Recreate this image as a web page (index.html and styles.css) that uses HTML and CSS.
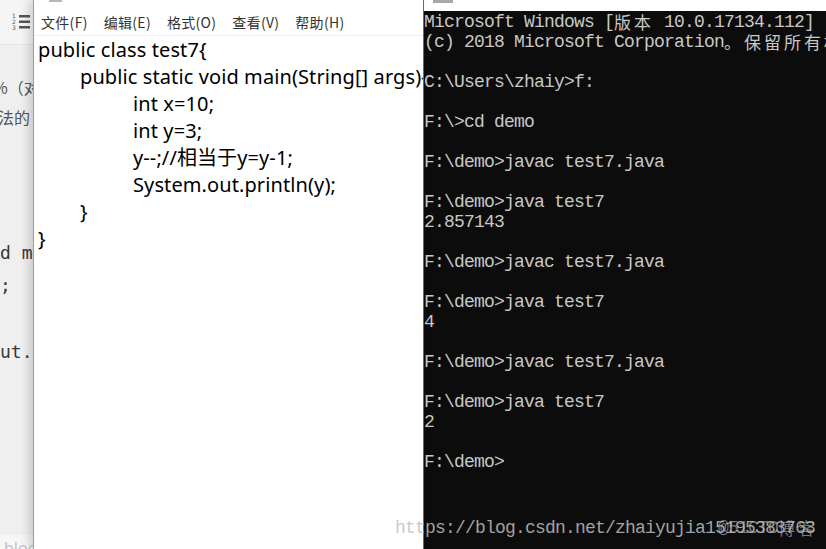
FILE: index.html
```html
<!DOCTYPE html>
<html lang="zh-CN">
<head>
<meta charset="UTF-8" />
<meta name="viewport" content="width=device-width, initial-scale=1" />
<title>test7 - 记事本 / 命令提示符</title>
<link rel="stylesheet" href="styles.css">
</head>
<body>
<div class="screen">

  <div class="page">
    <div class="page-toolbar">
      <svg class="list-icon" width="20" height="17" viewBox="0 0 20 17">
        <text x="0" y="5" font-size="6" font-family="DejaVu Sans" fill="#555">1</text>
        <text x="0" y="11" font-size="6" font-family="DejaVu Sans" fill="#555">2</text>
        <text x="0" y="17" font-size="6" font-family="DejaVu Sans" fill="#555">3</text>
        <rect x="7" y="2" width="11" height="2.5" fill="#555"/>
        <rect x="7" y="7.5" width="11" height="2.5" fill="#555"/>
        <rect x="7" y="13" width="11" height="2.5" fill="#555"/>
      </svg>
    </div>
    <div class="page-body">
      <p class="frag frag-a">%（对</p>
      <p class="frag frag-b">方法的</p>
      <pre class="frag-code"><span class="c1">void main</span>
<span class="c2">x;</span>

<span class="c3">System.out.</span></pre>
    </div>
    <div class="page-foot">blog</div>
  </div>

  <div class="notepad">
    <div class="np-title"><span class="np-icon"></span></div>
    <ul class="np-menu">
      <li>文件(F)</li>
      <li>编辑(E)</li>
      <li>格式(O)</li>
      <li>查看(V)</li>
      <li>帮助(H)</li>
    </ul>
    <div class="np-text">
      <div class="ln">public class test7{</div>
      <div class="ln ind1">public static void main(String[] args){</div>
      <div class="ln ind2">int x=10;</div>
      <div class="ln ind2">int y=3;</div>
      <div class="ln ind2">y--;//相当于y=y-1;</div>
      <div class="ln ind2">System.out.println(y);</div>
      <div class="ln ind1">}</div>
      <div class="ln">}</div>
    </div>
  </div>

  <div class="cmd">
    <div class="cmd-title"><span class="cmd-icon"></span></div>
    <pre class="cmd-out">Microsoft Windows [<span class="wide">版本</span> 10.0.17134.112]
(c) 2018 Microsoft Corporation<span class="wide">。保留所有权利。</span>

C:\Users\zhaiy&gt;f:

F:\&gt;cd demo

F:\demo&gt;javac test7.java

F:\demo&gt;java test7
2.857143

F:\demo&gt;javac test7.java

F:\demo&gt;java test7
4

F:\demo&gt;javac test7.java

F:\demo&gt;java test7
2

F:\demo&gt;</pre>
  </div>

  <div class="watermark">https://blog.csdn.net/zhaiyujia15195383763</div>
  <div class="watermark watermark-b">@51CTO<span class="wide">博客</span></div>
</div>
</body>
</html>
```

FILE: styles.css
```css
body {
  margin: 0;
  width: 826px;
  height: 549px;
  overflow: hidden;
  background-color: #fff;
}
.screen {
  position: relative;
  display: flex;
  height: 549px;
}

/* background web page, mostly hidden */
.page {
  width: 33px;
  flex: none;
  display: flex;
  flex-direction: column;
  background-color: #efefef;
  overflow: hidden;
}
.page-toolbar {
  height: 45px;
  flex: none;
  background-color: #f5f5f5;
  border-bottom: 1px solid #e4e4e4;
  padding: 13px 0 0 12px;
  box-sizing: border-box;
}
.list-icon {
  display: block;
}
.page-body {
  flex: 1;
}
.frag {
  margin: 0;
  font-family: "Noto Sans CJK SC", sans-serif;
  font-size: 16px;
  line-height: 30px;
  color: #555;
  white-space: nowrap;
}
.frag-a {
  margin-top: 27px;
  text-indent: -7px;
}
.frag-b {
  text-indent: -18px;
}
.frag-code {
  margin: 104px 0 0;
  font-family: "DejaVu Sans Mono", monospace;
  font-size: 18px;
  line-height: 33px;
  color: #383838;
}
.frag-code span {
  display: inline-block;
}
.c1 { margin-left: -32.5px; }
.c2 { margin-left: -10.8px; }
.c3 { margin-left: -86.7px; }
.page-foot {
  height: 14px;
  flex: none;
  background-color: #f6f6f6;
  font-family: "Noto Sans", sans-serif;
  font-size: 16px;
  line-height: 26px;
  color: #c4c4c4;
  text-indent: 4px;
  overflow: hidden;
}

/* notepad */
.notepad {
  position: relative;
  width: 390px;
  flex: none;
  box-sizing: border-box;
  border-left: 1px solid #9c9c9c;
  box-shadow: -4px 0 9px rgba(0, 0, 0, 0.16);
  background-color: #fff;
  overflow: hidden;
}
.np-title {
  height: 10px;
}
.np-icon {
  display: block;
  width: 13px;
  height: 2px;
  margin-left: 15px;
  background-color: #b8b8b8;
}
.np-menu {
  display: flex;
  gap: 16px;
  margin: 0;
  padding: 0 0 0 7px;
  list-style: none;
  height: 25px;
  border-bottom: 1px solid #efefef;
  font-family: "Noto Sans CJK SC", sans-serif;
  font-size: 14px;
  letter-spacing: 0.3px;
  line-height: 25px;
  color: #333;
}
.np-text {
  padding-left: 4px;
  font-family: "Noto Sans", "Noto Sans CJK SC", sans-serif;
  font-size: 20px;
  line-height: 27px;
  letter-spacing: 0.1px;
  color: #000;
  white-space: nowrap;
}
.ind1 { padding-left: 42px; }
.ind2 { padding-left: 95px; }

/* command prompt */
.cmd {
  flex: 1;
  border-left: 1px solid #1883d7;
  background-color: #0c0c0c;
  overflow: hidden;
}
.cmd-title {
  height: 11px;
  background-color: #fff;
}
.cmd-icon {
  display: block;
  width: 20px;
  height: 3px;
  margin-left: 9px;
  background-color: #a8a8a8;
}
.cmd-out {
  margin: 0;
  padding-top: 1px;
  font-family: "Liberation Mono", monospace;
  font-size: 18px;
  letter-spacing: -0.8px;
  line-height: 20px;
  color: #c8c8c8;
  white-space: pre;
}
.wide {
  display: inline-block;
  height: 20px;
  line-height: 20px;
  vertical-align: top;
  font-family: "Noto Sans CJK SC", sans-serif;
  font-size: 17px;
  letter-spacing: 3px;
}

.watermark {
  position: absolute;
  left: 395px;
  top: 518px;
  font-family: "Liberation Mono", monospace;
  font-size: 18px;
  letter-spacing: -0.8px;
  line-height: 20px;
  color: rgba(191, 191, 191, 0.86);
  white-space: nowrap;
}
.watermark-b {
  left: 718px;
  color: rgba(191, 191, 191, 0.6);
}
```
